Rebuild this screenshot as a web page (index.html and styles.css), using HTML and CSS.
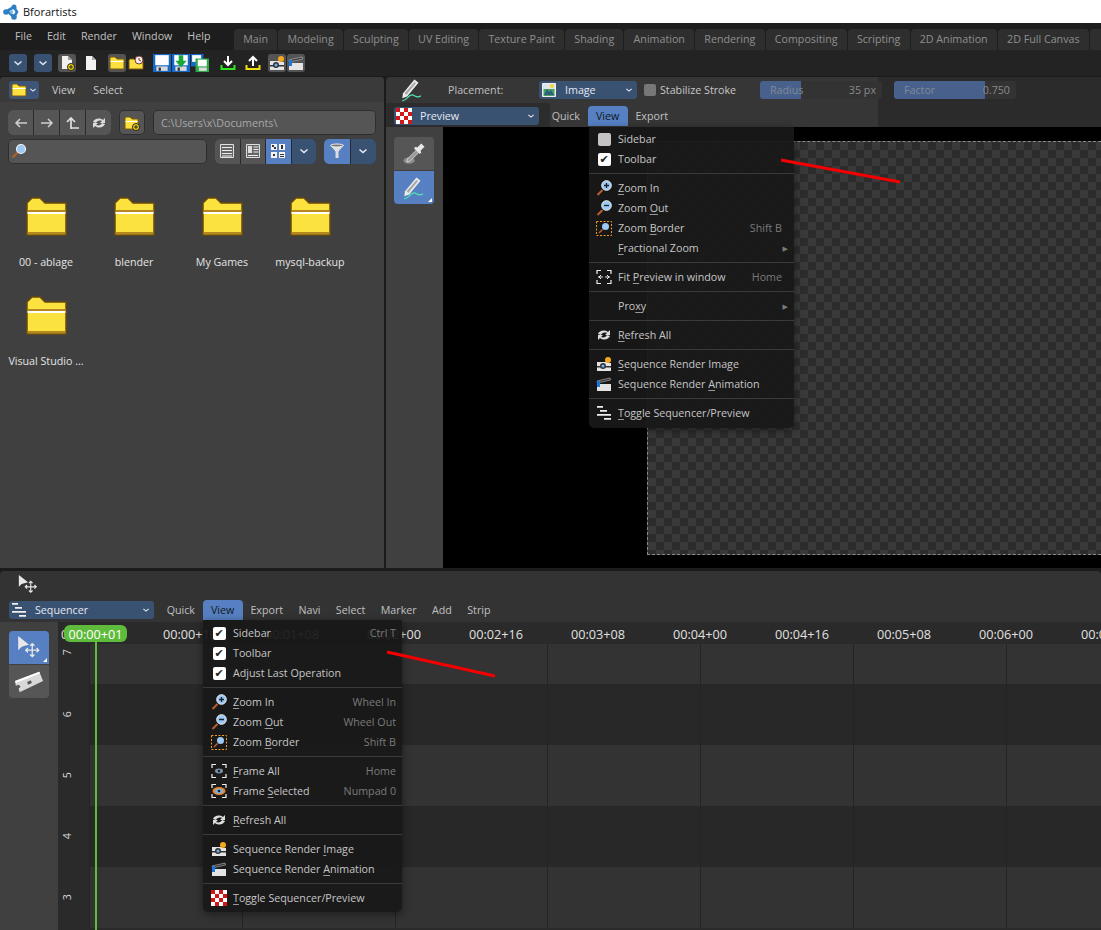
FILE: index.html
```html
<!DOCTYPE html>
<html lang="en">
<head>
<meta charset="utf-8">
<title>Bforartists</title>
<link rel="stylesheet" href="styles.css">
</head>
<body>
<svg class="defs" aria-hidden="true">
  <defs>
    <symbol id="chev" viewBox="0 0 16 16"><path d="M4.5 6.5 8 9.5l3.5-3" fill="none" stroke="currentColor" stroke-width="1.5"/></symbol>
    <symbol id="logo" viewBox="0 0 16 16"><path d="M11 3 4 7l7 6 3-5z" fill="none" stroke="#2f7fc4" stroke-width="2.600"/><circle cx="11" cy="3" r="2.500" fill="#2f7fc4"/><circle cx="3" cy="8" r="2.800" fill="#2f7fc4"/><circle cx="11" cy="13" r="2.800" fill="#2f7fc4"/><circle cx="8.500" cy="8" r="1.800" fill="#7ec0ec"/></symbol>
    <symbol id="filenew" viewBox="0 0 16 16"><path d="M3 1h6l4 4v9H3z" fill="#f2f2f2"/><path d="M9 1v4h4z" fill="#999"/><circle cx="12" cy="12" r="3.5" fill="#f5d90a" stroke="#222"/><path d="M10 12h4M12 10v4" stroke="#222"/></symbol>
    <symbol id="file" viewBox="0 0 16 16"><path d="M3 1h6l4 4v10H3z" fill="#f2f2f2"/><path d="M9 1v4h4z" fill="#aaa"/></symbol>
    <symbol id="folder" viewBox="0 0 16 16"><path d="M1 5V3l1-1h4l2 2h7v10H1z" fill="#fbe040" stroke="#7b5a0e"/><path d="M1.500 6.500h13" stroke="#fff"/></symbol>
    <symbol id="folderrecent" viewBox="0 0 16 16"><path d="M1 7V5l1-1h4l1 1h8v9H1z" fill="#fbe040" stroke="#7b5a0e"/><circle cx="11" cy="5" r="4" fill="#eee" stroke="#7a3a30"/><path d="M11 3v2l2 1" stroke="#a03020" fill="none"/></symbol>
    <symbol id="folderplus" viewBox="0 0 16 16"><path d="M1 5V3l1-1h4l2 2h6v10H1z" fill="#fbe040" stroke="#7b5a0e"/><path d="M1.500 6.500h12" stroke="#fff"/><circle cx="12" cy="12" r="3.500" fill="#f5d90a" stroke="#222"/><path d="M10 12h4M12 10v4" stroke="#222"/></symbol>
    <symbol id="save" viewBox="0 0 16 16"><path d="M0 0h16v16H0z" fill="#1668c8"/><path d="M2 1h12v9H2z" fill="#fff"/><path d="M3 11h10v4H3z" fill="#d8d8d8"/><path d="M5 12h2v3H5z" fill="#333"/></symbol>
    <symbol id="saveinc" viewBox="0 0 16 16"><path d="M0 0h16v16H0z" fill="#1668c8"/><path d="M2 1h12v9H2z" fill="#fff"/><path d="M3 11h10v4H3z" fill="#d8d8d8"/><path d="M5 12h2v3H5z" fill="#333"/><path d="M6 1h4v5h3l-5 6-5-6h3z" fill="#18a838"/></symbol>
    <symbol id="savecopy" viewBox="0 0 16 16"><path d="M0 0h11v11H0z" fill="#1668c8"/><path d="M1 1h8v6H1z" fill="#fff"/><path d="M4 4h12v12H4z" fill="#2ca848"/><path d="M6 5h8v6H6z" fill="#fff"/><path d="M7 12h7v3H7z" fill="#ddd"/></symbol>
    <symbol id="import" viewBox="0 0 16 16"><path d="M8 1v8M4 6l4 4 4-4" fill="none" stroke="#fff" stroke-width="2"/><path d="M1.500 10v4h13v-4" fill="none" stroke="#30e820" stroke-width="2"/></symbol>
    <symbol id="export" viewBox="0 0 16 16"><path d="M8 11V3M4 6l4-4 4 4" fill="none" stroke="#fff" stroke-width="2"/><path d="M1.500 10v4h13v-4" fill="none" stroke="#f0e010" stroke-width="2"/></symbol>
    <symbol id="renderimg" viewBox="0 0 16 16"><path d="M1 6h10l1 1h3v8H1z" fill="#e4e4e4"/><path d="M1 10h14v1.500H1z" fill="#333"/><circle cx="7" cy="10" r="3" fill="#333"/><circle cx="7" cy="10" r="1.500" fill="#6cb4f0"/><circle cx="12" cy="4" r="3" fill="#f5a81c"/></symbol>
    <symbol id="renderanim" viewBox="0 0 16 16"><path d="M1 8h14v7H1z" fill="#e4e4e4"/><path d="M1 5l13-3 .5 2-13 3z" fill="#333" stroke="#ddd" stroke-width=".5"/><path d="M1 5h3v6H1z" fill="#1a78e0"/></symbol>
    <symbol id="left" viewBox="0 0 16 16"><path d="M14 8H3M7 4 3 8l4 4" fill="none" stroke="#d0d0d0" stroke-width="1.500"/></symbol>
    <symbol id="right" viewBox="0 0 16 16"><path d="M2 8h11M9 4l4 4-4 4" fill="none" stroke="#d0d0d0" stroke-width="1.500"/></symbol>
    <symbol id="up" viewBox="0 0 16 16"><path d="M6 14V3M2 7l4-4 4 4M6 13h8" fill="none" stroke="#e0e0e0" stroke-width="1.700"/></symbol>
    <symbol id="refresh" viewBox="0 0 16 16"><path d="M2 7c1-3 6-5 10-2l2-2v5h-5l2-2c-3-1-5 0-6 2zM14 9c-1 3-6 5-10 2l-2 2V8h5L5 10c3 1 5 0 6-2z" fill="#dcdcdc"/></symbol>
    <symbol id="search" viewBox="0 0 16 16"><path d="M1.500 14.500 7 9" stroke="#b06030" stroke-width="2.200"/><circle cx="10" cy="6" r="4.500" fill="#9cc8f4" stroke="#f0f0f0" stroke-width="1.200"/></symbol>
    <symbol id="zoomin" viewBox="0 0 16 16"><path d="M1.500 15 6.500 10" stroke="#b86030" stroke-width="2"/><circle cx="10.500" cy="5.500" r="4.800" fill="#9cc8f4" stroke="#eee"/><path d="M8 5.500h5M10.500 3v5" stroke="#123" stroke-width="1.300"/></symbol>
    <symbol id="zoomout" viewBox="0 0 16 16"><path d="M1.500 15 6.500 10" stroke="#b86030" stroke-width="2"/><circle cx="10.500" cy="5.500" r="4.800" fill="#9cc8f4" stroke="#eee"/><path d="M8 5.500h5" stroke="#123" stroke-width="1.300"/></symbol>
    <symbol id="zoomborder" viewBox="0 0 16 16"><path d="M.5 1.500h15v14H.5z" fill="none" stroke="#f09a28" stroke-dasharray="2 1.500"/><path d="M3 13 6.500 9.500" stroke="#b86030" stroke-width="1.500"/><circle cx="9.500" cy="6.500" r="3.500" fill="#9cc8f4"/></symbol>
    <symbol id="fit" viewBox="0 0 16 16"><path d="M1 5V1.500h4M11 1.500h4V5M1 11v3.500h4M11 14.500h4V11" fill="none" stroke="#eee" stroke-width="1.200"/><path d="M2 8h5M5 6l-2 2 2 2M14 8H9M11 6l2 2-2 2" fill="none" stroke="#eee"/></symbol>
    <symbol id="frameall" viewBox="0 0 16 16"><path d="M1 5V1.500h4M11 1.500h4V5M1 11v3.500h4M11 14.500h4V11" fill="none" stroke="#eee" stroke-width="1.200"/><ellipse cx="8" cy="8" rx="4" ry="2.400" fill="#7a8ea0"/><circle cx="8" cy="8" r="1.200" fill="#123"/></symbol>
    <symbol id="frameselected" viewBox="0 0 16 16"><path d="M1 5V1.500h4M11 1.500h4V5M1 11v3.500h4M11 14.500h4V11" fill="none" stroke="#eee" stroke-width="1.200"/><ellipse cx="8" cy="8" rx="6.500" ry="4" fill="#e8862a"/><ellipse cx="8" cy="8" rx="4" ry="2.600" fill="#7ab0e0"/><circle cx="8" cy="8" r="1.300" fill="#123"/></symbol>
    <symbol id="checker" viewBox="0 0 16 16"><path d="M0 0h16v16H0z" fill="#fff"/><path d="M0 0h4v4H0zM8 0h4v4H8zM4 4h4v4H4zM12 4h4v4h-4zM0 8h4v4H0zM8 8h4v4H8zM4 12h4v4H4zM12 12h4v4h-4z" fill="#d01818"/></symbol>
    <symbol id="seq" viewBox="0 0 16 16"><path d="M1 1h6v1.800H1zM4 5h7v1.800H4zM1 9h14v1.800H1zM8 13h7v1.800H8z" fill="#f0f0f0"/></symbol>
    <symbol id="image" viewBox="0 0 16 16"><path d="M1.500 1.500h13v13h-13z" fill="#dfe6ea" stroke="#eee"/><path d="M2.500 7h11v7h-11z" fill="#49a060"/><path d="M3 13l3-6 2 3 2-2 3 5z" fill="#2c6080"/><circle cx="11" cy="4" r="2" fill="#f4d430"/></symbol>
    <symbol id="picker" viewBox="0 0 32 32"><ellipse cx="10" cy="24" rx="7" ry="4" fill="#8a8a8a"/><path d="M8 22 20 10l3 3-12 12-4 1z" fill="#9a9a9a" stroke="#dcdcdc"/><path d="M20 8l5-5 4 4-5 5 1 2-2 2-7-7 2-2z" fill="#e8e8e8"/></symbol>
    <symbol id="draw" viewBox="0 0 32 32"><path d="M5 20 19 3l5 4L10 24l-6 2z" fill="#ececec"/><path d="M7 20 19 6l2 1.500L9 22z" fill="#a8a8a8"/><path d="M4 29c5 1 7-7 12-7 4 0 5 5 11 1" fill="none" stroke="#50e8b0" stroke-width="1.500"/></symbol>
    <symbol id="move" viewBox="0 0 24 24"><path d="M2 1v13l3-3 3-1 4-1z" fill="#e8e8e8"/><path d="M15 8v12M9 14h12M13 10l2-2 2 2M13 18l2 2 2-2M11 12l-2 2 2 2M19 12l2 2-2 2" fill="none" stroke="#e8e8e8" stroke-width="1.200"/></symbol>
    <symbol id="razor" viewBox="0 0 32 32"><path d="M1 15 27 5l4 10-25 12-1-4 2-2-2-2-3 1z" fill="#d8d8d8"/><path d="M14 16l4-2 1 3-4 2z" fill="#565656"/><path d="M1 15 27 5l.6 1.800L2 17z" fill="#fff"/></symbol>
    <symbol id="list" viewBox="0 0 16 16"><path d="M1.500 1.500h13v13h-13z" fill="#666" stroke="#e0e0e0"/><path d="M3 4.500h10M3 7.500h10M3 10.500h10M3 13h10" stroke="#eee"/></symbol>
    <symbol id="detail" viewBox="0 0 16 16"><path d="M1.500 1.500h13v13h-13z" fill="#666" stroke="#ddd"/><path d="M3 3h4v7H3z" fill="#ddd"/><path d="M8.500 4h5M8.500 6.500h5M8.500 9h5M3 12.500h10" stroke="#eee"/></symbol>
    <symbol id="grid" viewBox="0 0 16 16"><path d="M1 1h6v6H1zM9 1h6v6H9zM1 9h6v6H1zM9 9h6v6H9z" fill="#f4f4f4"/><path d="M2 2h2v2H2zM4 4h2v2H4zM11 2h2v4h-2zM3 11h2v2H3zM10 11h4v1H10zM10 13h4v1H10z" fill="#333"/></symbol>
    <symbol id="funnel" viewBox="0 0 16 16"><path d="M1 2h14L9.500 8.500V15h-3V8.500z" fill="#ddd"/><ellipse cx="8" cy="2.500" rx="6.500" ry="1.500" fill="#777" stroke="#eee"/></symbol>
    <symbol id="folderbig" viewBox="0 0 41 39"><path d="M1 38V6l5-5h8l5 5h21v32z" fill="#fbe23e" stroke="#6a4a0a" stroke-width="1.500"/><path d="M1.500 13h38v2h-38z" fill="#b4881e"/><path d="M1.500 15h38v2h-38z" fill="#fff"/><path d="M1.500 35h38v2.300h-38z" fill="#b4881e"/></symbol>
  </defs>
</svg>

<header class="title"><svg class="i16"><use href="#logo"/></svg><span>Bforartists</span></header>

<nav class="topbar">
  <div class="menus"><span>File</span><span>Edit</span><span>Render</span><span>Window</span><span>Help</span></div>
  <div class="tabs">
    <span class="tab">Main</span><span class="tab">Modeling</span><span class="tab">Sculpting</span><span class="tab">UV Editing</span><span class="tab">Texture Paint</span><span class="tab">Shading</span><span class="tab">Animation</span><span class="tab">Rendering</span><span class="tab">Compositing</span><span class="tab">Scripting</span><span class="tab">2D Animation</span><span class="tab">2D Full Canvas</span><span class="tab tab-cut"></span>
  </div>
</nav>

<div class="toolbar">
  <span class="tb tb-blue"><svg class="i16"><use href="#chev"/></svg></span>
  <span class="tb tb-blue tb-g7"><svg class="i16"><use href="#chev"/></svg></span>
  <span class="tb tb-gray"><svg class="i16"><use href="#filenew"/></svg></span>
  <span class="tb"><svg class="i16"><use href="#file"/></svg></span>
  <span class="tb tb-gray tb-g8"><svg class="i16"><use href="#folder"/></svg></span>
  <span class="tb tb-n"><svg class="i16"><use href="#folderrecent"/></svg></span>
  <span class="tb tb-g8"><svg class="i18"><use href="#save"/></svg></span>
  <span class="tb tb-n"><svg class="i18"><use href="#saveinc"/></svg></span>
  <span class="tb tb-n"><svg class="i18"><use href="#savecopy"/></svg></span>
  <span class="tb tb-g10"><svg class="i16"><use href="#import"/></svg></span>
  <span class="tb tb-g7"><svg class="i16"><use href="#export"/></svg></span>
  <span class="tb tb-gray tb-g6"><svg class="i16"><use href="#renderimg"/></svg></span>
  <span class="tb tb-gray tb-n"><svg class="i16"><use href="#renderanim"/></svg></span>
</div>

<main class="upper">
  <section class="files">
    <div class="files-head">
      <span class="editor-btn"><svg class="i16"><use href="#folder"/></svg><svg class="i12"><use href="#chev"/></svg></span>
      <span class="hmenu hmenu-view">View</span><span class="hmenu">Select</span>
    </div>
    <div class="files-row">
      <div class="group">
        <span class="cell"><svg class="i16"><use href="#left"/></svg></span><span class="cell"><svg class="i16"><use href="#right"/></svg></span><span class="cell"><svg class="i16"><use href="#up"/></svg></span><span class="cell"><svg class="i16"><use href="#refresh"/></svg></span>
      </div>
      <span class="cell cell-solo"><svg class="i16"><use href="#folderplus"/></svg></span>
      <span class="field field-path">C:\Users\x\Documents\</span>
    </div>
    <div class="files-row files-row2">
      <span class="field field-search"><svg class="i16"><use href="#search"/></svg></span>
      <div class="group group-view">
        <span class="cell"><svg class="i16"><use href="#list"/></svg></span><span class="cell"><svg class="i16"><use href="#detail"/></svg></span><span class="cell cell-on"><svg class="i16"><use href="#grid"/></svg></span><span class="cell cell-dark"><svg class="i16"><use href="#chev"/></svg></span>
      </div>
      <div class="group group-filter">
        <span class="cell cell-on"><svg class="i16"><use href="#funnel"/></svg></span><span class="cell cell-dark"><svg class="i16"><use href="#chev"/></svg></span>
      </div>
    </div>
    <div class="folders">
      <div class="folder"><svg class="folder-i"><use href="#folderbig"/></svg><span>00 - ablage</span></div>
      <div class="folder"><svg class="folder-i"><use href="#folderbig"/></svg><span>blender</span></div>
      <div class="folder"><svg class="folder-i"><use href="#folderbig"/></svg><span>My Games</span></div>
      <div class="folder"><svg class="folder-i"><use href="#folderbig"/></svg><span>mysql-backup</span></div>
      <div class="folder"><svg class="folder-i"><use href="#folderbig"/></svg><span>Visual Studio ...</span></div>
    </div>
  </section>

  <section class="preview">
    <div class="prev-head">
      <div class="prev-row1">
        <svg class="draw-i"><use href="#draw"/></svg>
        <span class="placement">Placement:</span>
        <span class="dd dd-image"><svg class="i16"><use href="#image"/></svg><span class="dd-label">Image</span><svg class="i12"><use href="#chev"/></svg></span>
        <span class="check-off"></span><span class="stab">Stabilize Stroke</span>
        <span class="slider slider-radius"><span class="fill fill-radius"></span><span class="sl-text">Radius</span><span class="sl-val">35 px</span></span>
        <span class="slider slider-factor"><span class="fill fill-factor"></span><span class="sl-text">Factor</span><span class="sl-val">0.750</span></span>
      </div>
      <div class="prev-row2">
        <span class="dd dd-wide"><svg class="i16"><use href="#checker"/></svg><span class="dd-label">Preview</span><svg class="i12"><use href="#chev"/></svg></span>
        <span class="hitem hitem-first">Quick</span><span class="hitem hitem-on">View</span><span class="hitem">Export</span>
      </div>
    </div>
    <div class="prev-body">
      <div class="tools">
        <span class="tool tool-top"><svg class="i26"><use href="#picker"/></svg></span>
        <span class="tool tool-on tool-bottom"><svg class="i26"><use href="#draw"/></svg></span>
      </div>
      <div class="canvas"><div class="checks"></div></div>
    </div>

    <div class="menu menu-top">
      <div class="mi"><span class="mi-icon"><span class="box box-off"></span></span><span>Sidebar</span></div>
      <div class="mi"><span class="mi-icon"><span class="box">✔</span></span><span>Toolbar</span></div>
      <hr>
      <div class="mi"><svg class="mi-icon"><use href="#zoomin"/></svg><span><u>Z</u>oom In</span></div>
      <div class="mi"><svg class="mi-icon"><use href="#zoomout"/></svg><span>Zoom <u>O</u>ut</span></div>
      <div class="mi"><svg class="mi-icon"><use href="#zoomborder"/></svg><span>Zoom <u>B</u>order</span><span class="key">Shift B</span></div>
      <div class="mi"><span class="mi-icon"></span><span><u>F</u>ractional Zoom</span><span class="sub">▶</span></div>
      <hr>
      <div class="mi"><svg class="mi-icon"><use href="#fit"/></svg><span>Fit <u>P</u>review in window</span><span class="key">Home</span></div>
      <hr>
      <div class="mi"><span class="mi-icon"></span><span>Pro<u>x</u>y</span><span class="sub">▶</span></div>
      <hr>
      <div class="mi"><svg class="mi-icon"><use href="#refresh"/></svg><span><u>R</u>efresh All</span></div>
      <hr>
      <div class="mi"><svg class="mi-icon"><use href="#renderimg"/></svg><span><u>S</u>equence Render Image</span></div>
      <div class="mi"><svg class="mi-icon"><use href="#renderanim"/></svg><span>Sequence Render <u>A</u>nimation</span></div>
      <hr>
      <div class="mi"><svg class="mi-icon"><use href="#seq"/></svg><span><u>T</u>oggle Sequencer/Preview</span></div>
    </div>
  </section>
</main>

<section class="lower">
  <div class="low-row1"><svg class="i22"><use href="#move"/></svg></div>
  <div class="low-row2">
    <span class="dd dd-wide"><svg class="i16"><use href="#seq"/></svg><span class="dd-label">Sequencer</span><svg class="i12"><use href="#chev"/></svg></span>
    <span class="hitem hitem-first">Quick</span><span class="hitem hitem-on">View</span><span class="hitem">Export</span><span class="hitem">Navi</span><span class="hitem">Select</span><span class="hitem">Marker</span><span class="hitem">Add</span><span class="hitem">Strip</span>
  </div>
  <div class="low-body">
    <div class="tools tools-low">
      <span class="tool tool-on tool-top"><svg class="i26"><use href="#move"/></svg></span>
      <span class="tool tool-bottom"><svg class="i30"><use href="#razor"/></svg></span>
    </div>
    <div class="timeline">
      <div class="ruler">
        <span>00:00+00</span><span>00:00+16</span><span>00:01+08</span><span>00:02+00</span><span>00:02+16</span><span>00:03+08</span><span>00:04+00</span><span>00:04+16</span><span>00:05+08</span><span>00:06+00</span><span>00:06+16</span>
      </div>
      <div class="channel ch-light ch-first"><span class="ch-num"><span class="digit">7</span></span></div>
      <div class="channel ch-dark"><span class="ch-num"><span class="digit">6</span></span></div>
      <div class="channel ch-light"><span class="ch-num"><span class="digit">5</span></span></div>
      <div class="channel ch-dark"><span class="ch-num"><span class="digit">4</span></span></div>
      <div class="channel ch-light"><span class="ch-num"><span class="digit">3</span></span></div>
      <div class="playhead"></div>
      <div class="frame-badge">00:00+01</div>
    </div>
  </div>

  <div class="menu menu-low">
    <div class="mi"><span class="mi-icon"><span class="box">✔</span></span><span>Sidebar</span><span class="key">Ctrl T</span></div>
    <div class="mi"><span class="mi-icon"><span class="box">✔</span></span><span>Toolbar</span></div>
    <div class="mi"><span class="mi-icon"><span class="box">✔</span></span><span>Adjust Last Operation</span></div>
    <hr>
    <div class="mi"><svg class="mi-icon"><use href="#zoomin"/></svg><span><u>Z</u>oom In</span><span class="key">Wheel In</span></div>
    <div class="mi"><svg class="mi-icon"><use href="#zoomout"/></svg><span>Zoom <u>O</u>ut</span><span class="key">Wheel Out</span></div>
    <div class="mi"><svg class="mi-icon"><use href="#zoomborder"/></svg><span>Zoom <u>B</u>order</span><span class="key">Shift B</span></div>
    <hr>
    <div class="mi"><svg class="mi-icon"><use href="#frameall"/></svg><span><u>F</u>rame All</span><span class="key">Home</span></div>
    <div class="mi"><svg class="mi-icon"><use href="#frameselected"/></svg><span>Frame <u>S</u>elected</span><span class="key">Numpad 0</span></div>
    <hr>
    <div class="mi"><svg class="mi-icon"><use href="#refresh"/></svg><span><u>R</u>efresh All</span></div>
    <hr>
    <div class="mi"><svg class="mi-icon"><use href="#renderimg"/></svg><span>Sequence Render <u>I</u>mage</span></div>
    <div class="mi"><svg class="mi-icon"><use href="#renderanim"/></svg><span>Sequence Render <u>A</u>nimation</span></div>
    <hr>
    <div class="mi"><svg class="mi-icon"><use href="#checker"/></svg><span><u>T</u>oggle Sequencer/Preview</span></div>
  </div>
</section>

<svg class="annot" viewBox="0 0 1101 930" aria-hidden="true">
  <path d="M781 160 900 182M387 652 495 676" stroke="#f40000" stroke-width="3" fill="none"/>
</svg>
</body>
</html>
```

FILE: styles.css
```css
* { box-sizing: border-box; }
html, body { margin: 0; padding: 0; }
body {
  width: 1101px;
  height: 930px;
  overflow: hidden;
  position: relative;
  background: #1b1b1b;
  color: #c8c8c8;
  font: 10.7px/1 "Open Sans", "DejaVu Sans", sans-serif;
}
.defs { position: absolute; width: 0; height: 0; }
svg { display: block; flex: none; }
.i12 { width: 12px; height: 12px; }
.i16 { width: 16px; height: 16px; }
.i18 { width: 18px; height: 18px; }
.i22 { width: 22px; height: 22px; }
.i26 { width: 26px; height: 26px; }
.i30 { width: 30px; height: 30px; }

/* window title */
.title {
  height: 23px;
  background: #fff;
  color: #111;
  display: flex;
  align-items: center;
  font-size: 11px;
  padding-left: 3px;
  gap: 4px;
}

/* top bar */
.topbar {
  height: 27px;
  background: #1d1d1d;
  display: flex;
  align-items: flex-end;
  justify-content: space-between;
}
.menus {
  display: flex;
  gap: 15px;
  padding: 0 0 8px 15px;
  color: #c0c0c0;
}
.tabs { display: flex; gap: 1px; width: 867px; overflow: hidden; }
.tab {
  height: 21px;
  padding: 0 9.2px;
  background: #2e2e2e;
  color: #8f8f8f;
  border-radius: 4px 4px 0 0;
  display: flex;
  align-items: center;
  flex: none;
}
.tab-cut { width: 30px; }

/* tool row */
.toolbar {
  height: 26px;
  background: #232323;
  display: flex;
  align-items: center;
  padding-left: 9px;
  margin-bottom: 1px;
  gap: 6px;
}
.tb {
  width: 18px;
  height: 18px;
  border-radius: 3px;
  display: flex;
  align-items: center;
  justify-content: center;
  color: #dfe6f0;
}
.tb-blue { background: #3a5272; }
.tb-gray { background: #545454; }
.tb-n { margin-left: -5px; }
.tb-g6 { margin-left: 0; }
.tb-g7 { margin-left: 1px; }
.tb-g8 { margin-left: 2px; }
.tb-g10 { margin-left: 4px; }

/* main split */
.upper { display: flex; height: 491px; gap: 2px; position: relative; }

/* file browser */
.files {
  width: 384px;
  background: #404040;
  border-radius: 4px 4px 0 0;
  padding: 0 8px;
}
.files-head {
  height: 25px;
  margin: 0 -8px;
  padding-left: 9px;
  background: #3a3a3a;
  border-radius: 4px 4px 0 0;
  display: flex;
  align-items: center;
}
.editor-btn {
  width: 30px;
  height: 18px;
  background: #3d5578;
  border-radius: 3px;
  display: flex;
  align-items: center;
  padding-left: 2px;
  color: #e4e8f0;
}
.hmenu { color: #c8c8c8; margin: 2px 0 0 18px; }
.hmenu-view { margin-left: 13px; }
.files-row {
  display: flex;
  align-items: center;
  margin-top: 8px;
  height: 25px;
  gap: 8px;
}
.files-row2 { margin-top: 3px; height: 26px; }
.group {
  display: flex;
  gap: 1px;
  height: 25px;
  border-radius: 5px;
  overflow: hidden;
  background: #2a2a2a;
  flex: none;
}
.group-view .cell { width: 24.5px; }
.cell {
  width: 25px;
  height: 25px;
  background: #555;
  display: flex;
  align-items: center;
  justify-content: center;
  color: #e8ecf4;
  flex: none;
}
.group-filter .cell { width: 25.5px; }
.cell-solo { width: 26px; border-radius: 5px; box-shadow: inset 0 0 0 1px #2e2e2e; }
.cell-on, .group-view .cell-on, .group-filter .cell-on { background: #5680c2; }
.cell-dark { background: #3a5272; }
.field {
  flex: 1;
  height: 25px;
  background: #555;
  border-radius: 5px;
  display: flex;
  align-items: center;
  padding-left: 8px;
  color: #a8a8a8;
  box-shadow: inset 0 0 0 1px #2e2e2e;
}
.field-path { padding-top: 2px; }
.field-search { padding-left: 3px; flex: none; width: 199px; }
.folders {
  display: grid;
  grid-template-columns: repeat(4, 88px);
  grid-auto-rows: 99px;
  margin: 33px 0 0 -6px;
}
.folder {
  display: flex;
  flex-direction: column;
  align-items: center;
  color: #e4e4e4;
  gap: 21px;
  white-space: nowrap;
}
.folder-i { width: 41px; height: 39px; }

/* preview */
.preview { flex: 1; position: relative; min-width: 0; }
.prev-head {
  height: 50px;
  background: linear-gradient(to right, #363636 0, #363636 492px, #2b2b2b 492px);
  border-radius: 4px 0 0 0;
}
.prev-row1 {
  height: 26px;
  padding-left: 12px;
  display: flex;
  align-items: center;
}
.draw-i { width: 28px; height: 26px; }
.placement { margin-left: 22px; width: 91px; color: #c0c0c0; }
.dd {
  height: 18px;
  background: #3a5272;
  border-radius: 3px;
  display: flex;
  align-items: center;
  padding: 0 2px;
  color: #e4e8f0;
  flex: none;
}
.dd-label { flex: 1; padding-left: 8px; }
.dd-image { width: 98px; }
.dd-wide { width: 145px; }
.check-off {
  width: 12px;
  height: 12px;
  background: #777;
  border-radius: 2px;
  margin-left: 7px;
}
.stab { margin-left: 4px; width: 100px; color: #c8c8c8; }
.slider {
  width: 122px;
  height: 18px;
  background: #333;
  border-radius: 3px;
  position: relative;
  display: flex;
  align-items: center;
  justify-content: space-between;
  padding: 0 6px 0 10px;
  overflow: hidden;
  color: #828a96;
}
.slider-factor { margin-left: 12px; }
.fill { position: absolute; left: 0; top: 0; bottom: 0; background: #47608c; }
.fill-radius { width: 41px; }
.fill-factor { width: 91px; }
.sl-text, .sl-val { position: relative; }
.sl-val { color: #8a8a8a; }
.prev-row2 {
  height: 24px;
  display: flex;
  align-items: center;
  padding: 2px 0 0 8px;
  background: linear-gradient(to right, #2c2c2c 0, #2c2c2c 164px, transparent 164px);
}
.hitem {
  height: 20px;
  padding: 0 7.7px;
  display: flex;
  align-items: center;
  color: #c0c0c0;
  flex: none;
}
.hitem-on { background: #5680c2; color: #101820; border-radius: 4px 4px 0 0; width: 40px; justify-content: center; padding: 0; }
.hitem-first { margin-left: 5px; }
.prev-body { display: flex; height: 441px; }
.tools {
  width: 57px;
  background: #404040;
  padding: 10px 0 0 8px;
  flex: none;
  display: flex;
  flex-direction: column;
  gap: 1px;
}
.tool {
  width: 40px;
  height: 33px;
  background: #565656;
  display: flex;
  align-items: center;
  justify-content: center;
  position: relative;
}
.tool-top { border-radius: 4px 4px 0 0; }
.tool-bottom { border-radius: 0 0 4px 4px; }
.tool-on { background: #5680c2; }
.tool-on::after {
  content: "";
  position: absolute;
  right: 2px;
  bottom: 2px;
  border: 2px solid transparent;
  border-right-color: #fff;
  border-bottom-color: #fff;
}
.canvas { flex: 1; background: #000; padding: 14px 0 13px 204px; }
.checks {
  height: 100%;
  border: 1px dashed #8a8a8a;
  border-right: 0;
  background: repeating-conic-gradient(#2c2c2c 0 25%, #393939 0 50%) 0 0 / 16px 16px;
}

/* popup menus */
.menu {
  position: absolute;
  background: rgba(24, 24, 24, 0.94);
  border-radius: 0 0 5px 5px;
  box-shadow: 0 2px 8px rgba(0, 0, 0, 0.45);
  color: #c6c6c6;
  z-index: 5;
}
.menu-top { left: 203px; top: 50px; width: 205px; padding: 2px 0 5px; }
.menu-low { left: 203px; top: 49px; width: 199px; padding: 3px 0 4px; }
.menu hr { height: 1px; border: 0; margin: 4px 0; background: #3a3a3a; }
.mi { height: 20px; display: flex; align-items: center; padding: 0 6px 0 7px; }
.menu-low .mi { padding-left: 8px; }
.mi-icon { width: 16px; height: 16px; margin-right: 6px; flex: none; display: flex; align-items: center; justify-content: center; }
.box {
  width: 13px;
  height: 13px;
  background: #fff;
  border-radius: 2px;
  color: #222;
  font: 11px/13px "DejaVu Sans", sans-serif;
  text-align: center;
}
.box-off { background: #c4c4c4; }
.key { margin-left: auto; color: #7a7a7a; }
.menu-top .key { margin-right: 6px; }
.sub { margin-left: auto; color: #7a7a7a; font-size: 7px; }
u { text-underline-offset: 2px; text-decoration-thickness: 1px; text-decoration-color: #999; }

/* lower area */
.lower { margin-top: 3px; height: 359px; background: #333; position: relative; border-radius: 4px 4px 0 0; overflow: hidden; }
.low-row1 { height: 26px; padding: 3px 0 0 17px; }
.low-row2 { height: 25px; display: flex; align-items: center; padding: 1px 0 0 9px; }
.low-body { display: flex; height: 308px; }
.tools-low { width: 58px; padding: 9px 0 0 9px; }
.timeline { flex: 1; position: relative; overflow: hidden; background: #2a2a2a; }
.ruler {
  height: 22px;
  padding-top: 3px;
  display: grid;
  grid-template-columns: repeat(11, 102px);
  margin-left: -21px;
  align-items: center;
  justify-items: center;
  background: #2a2a2a;
  color: #e0e0e0;
  font-size: 12.7px;
}
.channel {
  height: 61px;
  background-image: repeating-linear-gradient(to right, #242424 0 1px, transparent 1px 152.8px);
  background-position: 31px 0;
  display: flex;
  position: relative;
}
.ch-first { height: 40px; }
.ch-light { background-color: #333; }
.ch-dark { background-color: #282828; }
.ch-num {
  width: 31px;
  background: #2a2a2a;
  color: #d8d8d8;
  display: flex;
  align-items: center;
  padding-left: 4px;
}
.ch-first .ch-num { align-items: flex-start; padding-top: 5px; }
.digit { writing-mode: vertical-rl; transform: rotate(180deg); }
.playhead { position: absolute; left: 37px; top: 18px; bottom: 0; width: 2px; background: #5fbb3c; }
.frame-badge {
  position: absolute;
  left: 6px;
  top: 3px;
  width: 63px;
  height: 17px;
  padding-top: 2px;
  background: #5fbb3c;
  border-radius: 6px;
  color: #fff;
  font-size: 12.7px;
  display: flex;
  align-items: center;
  justify-content: center;
}

.annot { position: absolute; left: 0; top: 0; width: 1101px; height: 930px; z-index: 9; pointer-events: none; }
```
